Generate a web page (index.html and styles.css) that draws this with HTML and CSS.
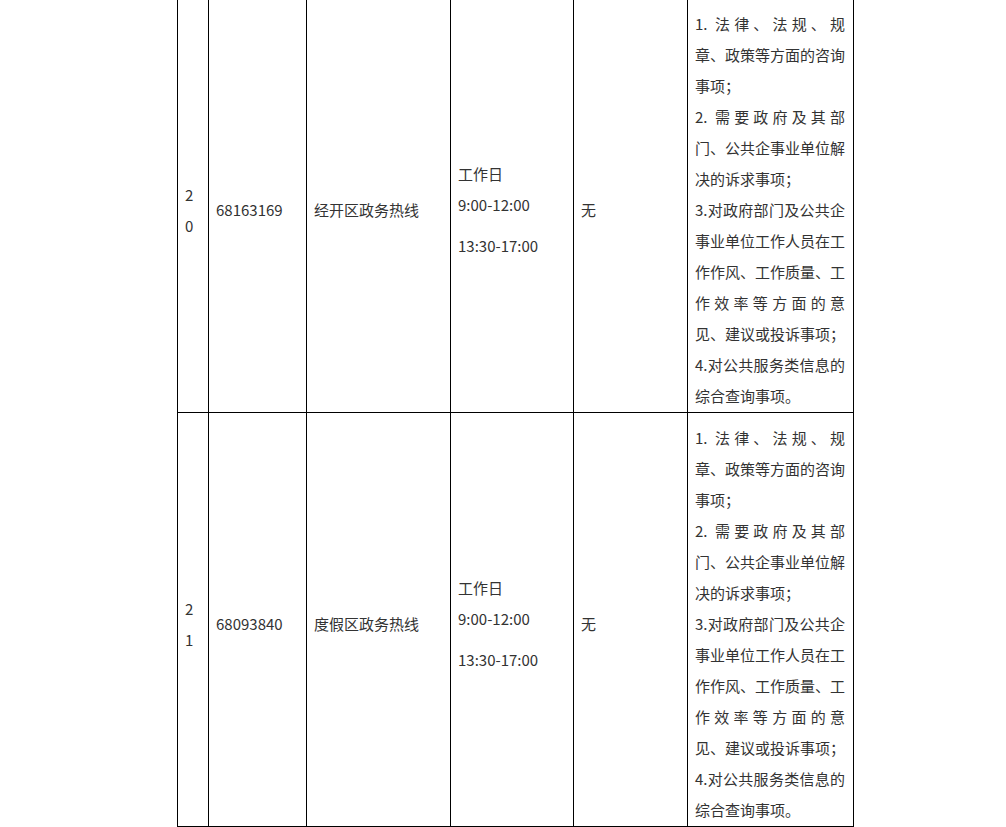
FILE: index.html
```html
<!DOCTYPE html>
<html lang="zh-CN">
<head>
<meta charset="utf-8">
<title>政务热线</title>
<link rel="stylesheet" href="styles.css">
</head>
<body>
<table class="hotlines">
  <colgroup>
    <col class="c-no">
    <col class="c-tel">
    <col class="c-name">
    <col class="c-time">
    <col class="c-other">
    <col class="c-scope">
  </colgroup>
  <tbody>
    <tr>
      <td class="no">20</td>
      <td>68163169</td>
      <td>经开区政务热线</td>
      <td><p>工作日<br>9:00-12:00</p><p class="gap">13:30-17:00</p></td>
      <td>无</td>
      <td class="scope">
        <p><span class="l">1. 法律、法规、规</span><span class="l">章、政策等方面的咨询</span><span class="e">事项；</span></p>
        <p><span class="l">2. 需要政府及其部</span><span class="l">门、公共企事业单位解</span><span class="e">决的诉求事项；</span></p>
        <p><span class="l">3.对政府部门及公共企</span><span class="l">事业单位工作人员在工</span><span class="l">作作风、工作质量、工</span><span class="l">作效率等方面的意</span><span class="e">见、建议或投诉事项；</span></p>
        <p><span class="l">4.对公共服务类信息的</span><span class="e">综合查询事项。</span></p>
      </td>
    </tr>
    <tr>
      <td class="no">21</td>
      <td>68093840</td>
      <td>度假区政务热线</td>
      <td><p>工作日<br>9:00-12:00</p><p class="gap">13:30-17:00</p></td>
      <td>无</td>
      <td class="scope">
        <p><span class="l">1. 法律、法规、规</span><span class="l">章、政策等方面的咨询</span><span class="e">事项；</span></p>
        <p><span class="l">2. 需要政府及其部</span><span class="l">门、公共企事业单位解</span><span class="e">决的诉求事项；</span></p>
        <p><span class="l">3.对政府部门及公共企</span><span class="l">事业单位工作人员在工</span><span class="l">作作风、工作质量、工</span><span class="l">作效率等方面的意</span><span class="e">见、建议或投诉事项；</span></p>
        <p><span class="l">4.对公共服务类信息的</span><span class="e">综合查询事项。</span></p>
      </td>
    </tr>
  </tbody>
</table>
</body>
</html>
```
FILE: styles.css
```css
html, body {
  margin: 0;
  padding: 0;
  background: #ffffff;
}
body {
  font-family: "Noto Sans CJK SC", "Noto Sans", sans-serif;
  font-size: 15px;
  line-height: 31px;
  color: #333333;
  overflow: hidden;
}
.hotlines {
  margin: -2px 0 0 177px;
  border-collapse: collapse;
  table-layout: fixed;
  width: 677px;
}
.c-no { width: 31px; }
.c-tel { width: 98px; }
.c-name { width: 144px; }
.c-time { width: 123px; }
.c-other { width: 114px; }
.c-scope { width: 166px; }
.hotlines td {
  border: 1px solid #000000;
  padding: 9px 8px 1px 7px;
  vertical-align: middle;
  text-align: left;
}
.hotlines p {
  margin: 0;
}
.hotlines p.gap {
  margin-top: 10px;
}
.no {
  word-break: break-all;
}
.scope .l {
  display: block;
  text-align: justify;
  text-align-last: justify;
}
.scope .e {
  display: block;
}
```
